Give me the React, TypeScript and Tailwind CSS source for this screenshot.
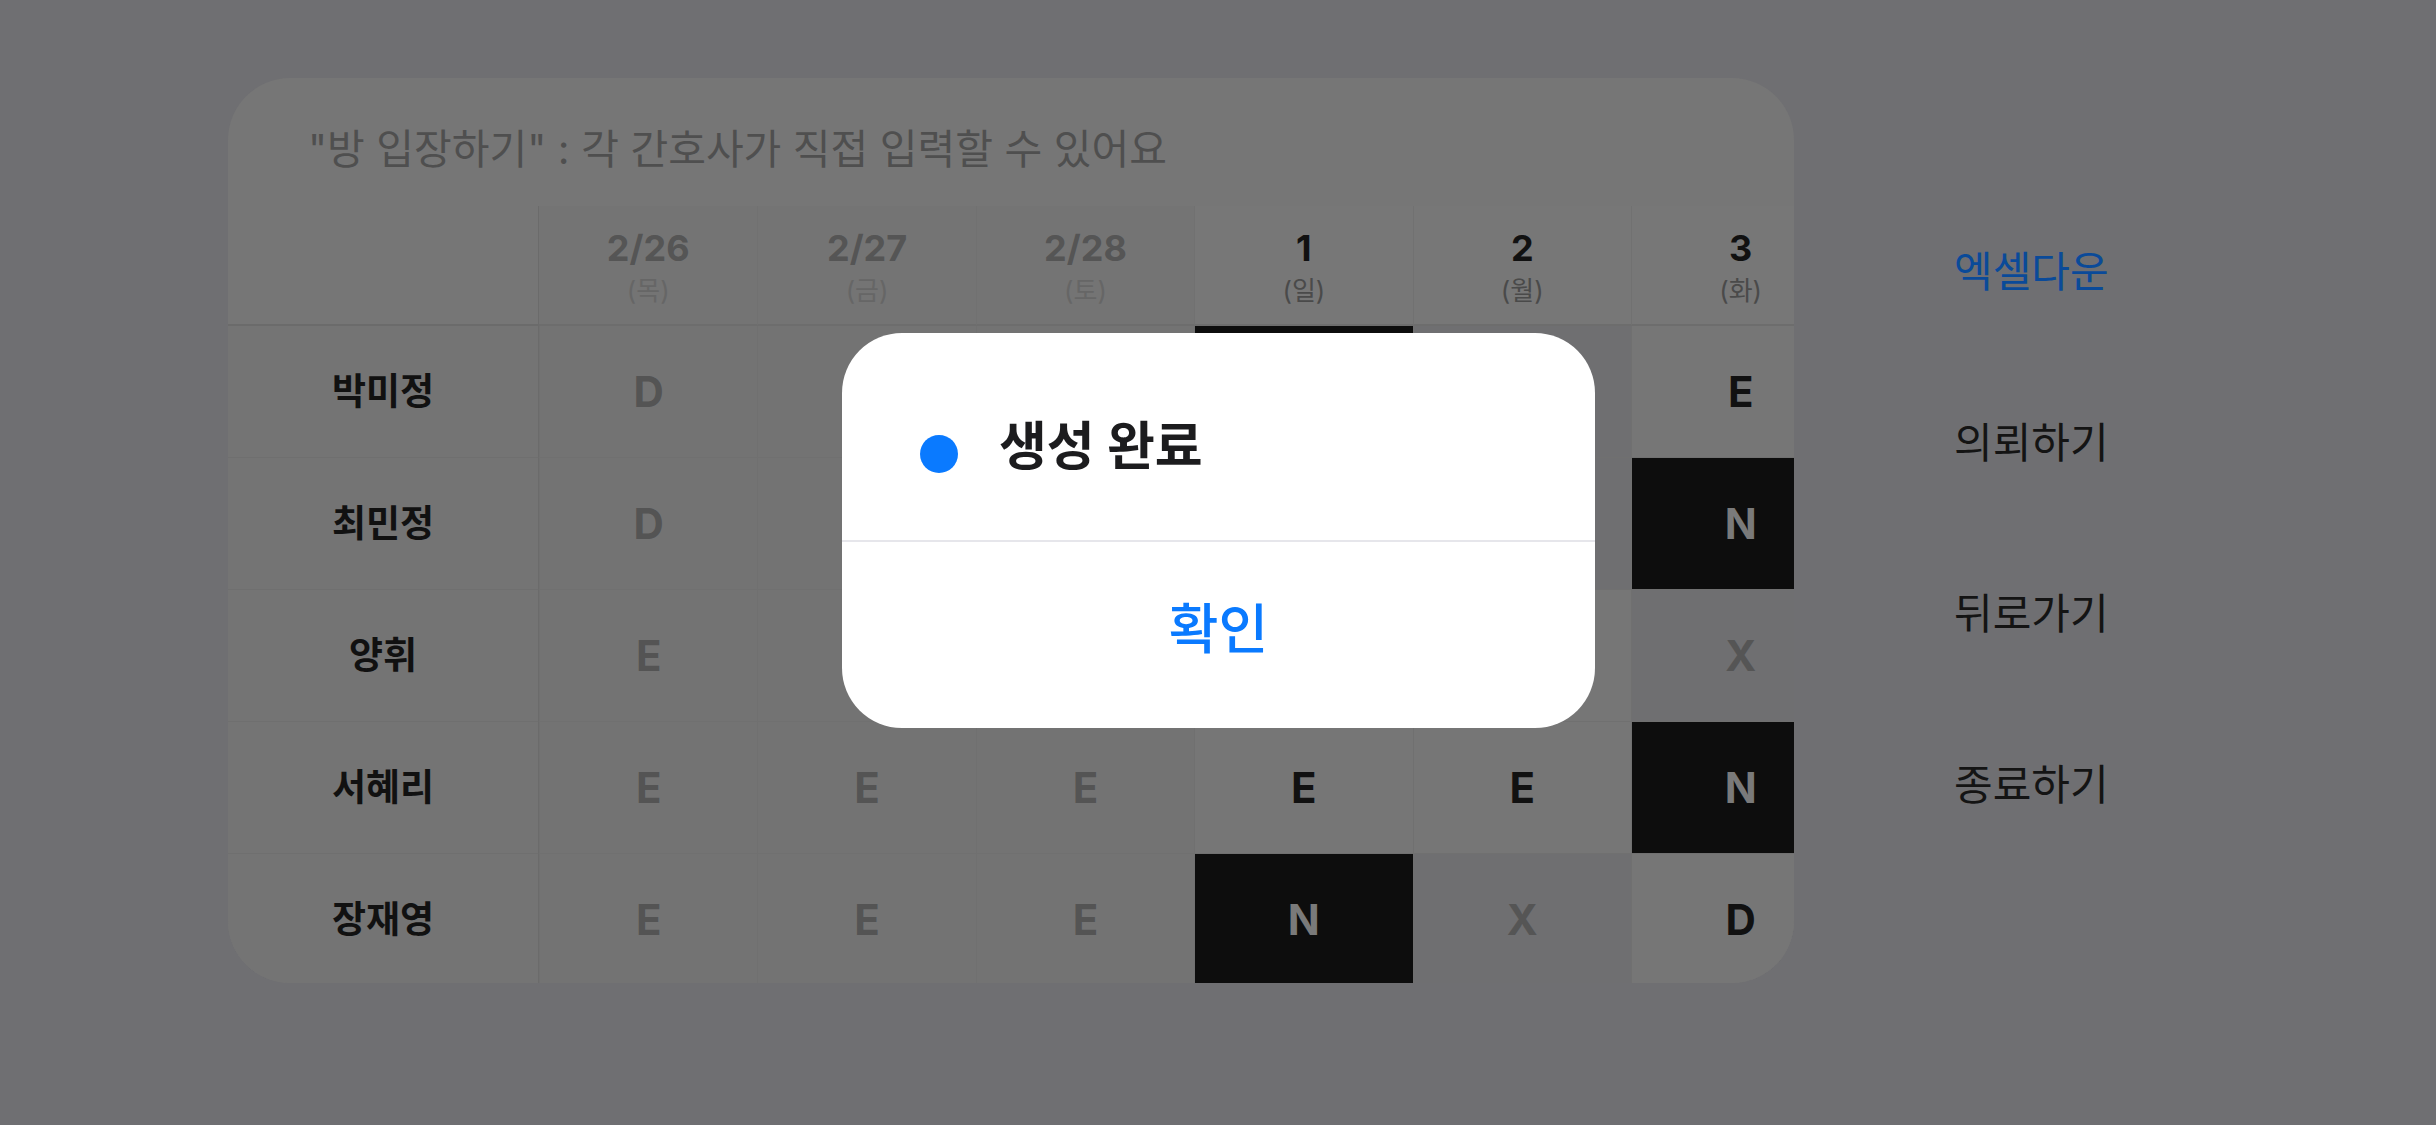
import React from "react";

type Cell = { v: string; kind: "normal" | "night" | "off" };

const dates = [
  { d: "2/26", w: "(목)", past: true },
  { d: "2/27", w: "(금)", past: true },
  { d: "2/28", w: "(토)", past: true },
  { d: "1", w: "(일)", past: false },
  { d: "2", w: "(월)", past: false },
  { d: "3", w: "(화)", past: false },
];

const n = (v: string): Cell => ({ v, kind: v === "N" ? "night" : v === "X" ? "off" : "normal" });

const rows: { name: string; cells: Cell[] }[] = [
  { name: "박미정", cells: ["D", "D", "D", "N", "X", "E"].map(n) },
  { name: "최민정", cells: ["D", "D", "D", "E", "X", "N"].map(n) },
  { name: "양휘", cells: ["E", "E", "E", "D", "D", "X"].map(n) },
  { name: "서혜리", cells: ["E", "E", "E", "E", "E", "N"].map(n) },
  { name: "장재영", cells: ["E", "E", "E", "N", "X", "D"].map(n) },
];

function DataCell({ cell, past }: { cell: Cell; past: boolean }) {
  let bg = past ? "bg-[#737373]" : "bg-[#767676]";
  let color = past ? "text-[#545454]" : "text-[#111111]";
  if (cell.kind === "night") {
    bg = "bg-[#0d0d0d]";
    color = "text-[#7a7a7a]";
  } else if (cell.kind === "off") {
    bg = "bg-[#6f6f71]";
    color = "text-[#555555]";
  }
  return (
    <div
      className={`flex items-center justify-center border-l border-b border-[#707070] ${bg} ${color} text-[42px] font-bold leading-none`}
    >
      {cell.v}
    </div>
  );
}

export default function App() {
  return (
    <div
      className="relative w-[2436px] h-[1125px] overflow-hidden bg-[#6f6f72] flex items-start pt-[78px] pl-[228px]"
      style={{ fontFamily: "Inter, 'Noto Sans CJK KR', sans-serif" }}
    >
      {/* Card */}
      <div className="w-[1566px] h-[905px] shrink-0 rounded-[62px] bg-[#767676] overflow-hidden flex flex-col">
        <div className="h-[128px] shrink-0 pl-[80px] pt-[46px]">
          <div className="text-[41px] leading-[50px] text-[#4f4f4f]">
            "방 입장하기" : 각 간호사가 직접 입력할 수 있어요
          </div>
        </div>
        <div className="grid grid-cols-[311px_repeat(6,218.4px)] grid-rows-[120px_repeat(5,132px)]">
          {/* header */}
          <div className="border-r border-b-2 border-[#6b6b6b] bg-[#767676]" />
          {dates.map((d, i) => (
            <div
              key={d.d}
              className={`flex flex-col items-center pt-[21px] border-b-2 border-b-[#6d6d6d] ${
                i === 0 ? "" : "border-l border-l-[#717171]"
              } ${d.past ? "bg-[#747474]" : "bg-[#777777]"}`}
            >
              <div
                className={`text-[36px] font-bold leading-[42px] ${
                  d.past ? "text-[#555555]" : "text-[#111111]"
                }`}
              >
                {d.d}
              </div>
              <div
                className={`mt-[7px] text-[26px] leading-[30px] ${
                  d.past ? "text-[#666666]" : "text-[#4a4a4a]"
                }`}
              >
                {d.w}
              </div>
            </div>
          ))}
          {rows.map((r) => (
            <React.Fragment key={r.name}>
              <div className="flex items-center justify-center border-r border-r-[#6b6b6b] border-b border-b-[#6f6f6f] bg-[#747474] text-[37px] font-bold text-[#111111]">
                {r.name}
              </div>
              {r.cells.map((c, i) => (
                <DataCell key={i} cell={c} past={dates[i].past} />
              ))}
            </React.Fragment>
          ))}
        </div>
      </div>

      {/* Right menu */}
      <div className="ml-[160px] mt-[108px] flex flex-col text-[42px]">
        <div className="h-[171px] flex items-center text-[#0a4a99]">엑셀다운</div>
        <div className="h-[171px] flex items-center text-[#141414]">의뢰하기</div>
        <div className="h-[171px] flex items-center text-[#141414]">뒤로가기</div>
        <div className="h-[171px] flex items-center text-[#141414]">종료하기</div>
      </div>

      {/* Modal */}
      <div className="absolute left-[842px] top-[333px] w-[753px] h-[395px] rounded-[60px] bg-white flex flex-col overflow-hidden">
        <div className="h-[207px] shrink-0 flex items-start pl-[78px] pt-[82px]">
          <div className="mt-[20px] w-[38px] h-[38px] rounded-full bg-[#0a7aff] shrink-0" />
          <div className="ml-[41px] text-[52px] leading-[64px] font-bold text-[#1c1c1e]">생성 완료</div>
        </div>
        <div className="h-[2px] shrink-0 bg-[#e6e6eb]" />
        <div className="flex-1 flex items-center justify-center pb-[10px]">
          <div className="text-[54px] leading-[64px] font-medium text-[#0a7aff]">확인</div>
        </div>
      </div>
    </div>
  );
}
